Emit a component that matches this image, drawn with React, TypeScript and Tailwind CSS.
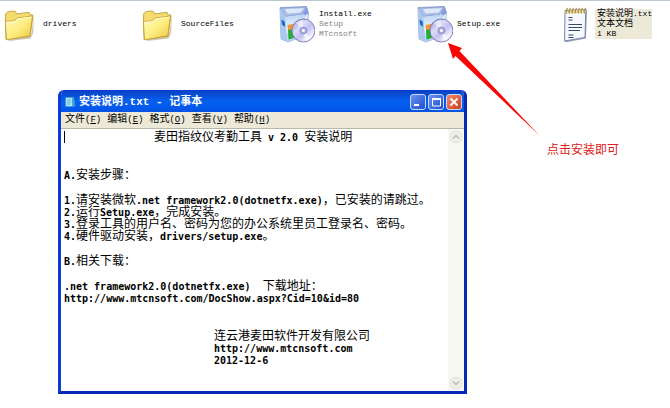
import type { ReactNode } from 'react'

const menus = [
  { label: '文件', accessKey: 'F' },
  { label: '编辑', accessKey: 'E' },
  { label: '格式', accessKey: 'O' },
  { label: '查看', accessKey: 'V' },
  { label: '帮助', accessKey: 'H' },
]

const documentLines = [
  { text: '麦田指纹仪考勤工具 v 2.0 安装说明', indent: 'pl-[90px]' },
  { text: '' },
  { text: '' },
  { text: 'A.安装步骤：' },
  { text: '' },
  { text: '1.请安装微软.net framework2.0(dotnetfx.exe)，已安装的请跳过。' },
  { text: '2.运行Setup.exe，完成安装。' },
  { text: '3.登录工具的用户名、密码为您的办公系统里员工登录名、密码。' },
  { text: '4.硬件驱动安装，drivers/setup.exe。' },
  { text: '' },
  { text: 'B.相关下载：' },
  { text: '' },
  { text: '.net framework2.0(dotnetfx.exe)  下载地址：' },
  { text: 'http://www.mtcnsoft.com/DocShow.aspx?Cid=10&id=80' },
  { text: '' },
  { text: '' },
  { text: '连云港麦田软件开发有限公司', indent: 'pl-[150px]' },
  { text: 'http://www.mtcnsoft.com', indent: 'pl-[150px]' },
  { text: '2012-12-6', indent: 'pl-[150px]' },
]

function FolderIcon() {
  return (
    <svg viewBox="0 0 36 36" className="size-9" aria-hidden="true">
      <defs>
        <linearGradient id="folderFront" x1="0" y1="0" x2="1" y2="1">
          <stop offset="0" stopColor="#fffbc0" />
          <stop offset="0.5" stopColor="#fdee83" />
          <stop offset="1" stopColor="#edc53f" />
        </linearGradient>
      </defs>
      <path d="M4 32 L28 29.500 L31 10 L30 27.500 L27.500 32.500 L6 35Z" fill="#b9ad8a" opacity="0.7" />
      <path d="M2.500 14 L2.700 7.500 Q4 5.700 7 5.400 L11 5 Q13 5 13.500 8 L26 6.300 L27 9 L29.500 8.800 L30 10 L27 30 L3 33.500Z" fill="#f4dc70" stroke="#b7962f" strokeWidth="0.800" />
      <path d="M2.300 15.500 L11.500 14.800 L14 12 L29.500 10 L26.800 29.800 L3.600 33.800Z" fill="url(#folderFront)" stroke="#c39a28" strokeWidth="0.800" />
      <path d="M3.200 16.400 L12 15.700 L14.500 13 L28.500 11" fill="none" stroke="#fffde0" strokeWidth="0.900" />
    </svg>
  )
}

function SetupIcon() {
  return (
    <svg viewBox="0 0 36 38" className="h-[38px] w-9" aria-hidden="true">
      <defs>
        <linearGradient id="boxFront" x1="0" y1="0" x2="0" y2="1">
          <stop offset="0" stopColor="#bad4f7" />
          <stop offset="0.5" stopColor="#edf4fd" />
          <stop offset="1" stopColor="#a9c8f0" />
        </linearGradient>
        <linearGradient id="disc" x1="0" y1="0" x2="1" y2="1">
          <stop offset="0" stopColor="#8d8cd4" />
          <stop offset="0.350" stopColor="#dcdcf8" />
          <stop offset="0.550" stopColor="#c3c0ef" />
          <stop offset="0.800" stopColor="#f4f4ff" />
          <stop offset="1" stopColor="#9997d5" />
        </linearGradient>
      </defs>
      <path d="M1 2.500 L27.500 1.500 L29.500 8 L27 30 L9 37 L2 34Z" fill="#e8f0fb" stroke="#8398c4" strokeWidth="0.700" />
      <path d="M1.200 3 L27.300 1.800 L23 9.500 L6.500 11.500Z" fill="#a9bfea" stroke="#7188bd" strokeWidth="0.600" />
      <path d="M6 4 L25 3.200 L21.500 7.500 L8.500 8.500Z" fill="#dfe9fa" />
      <path d="M27.500 1.800 L29.600 8 L25.800 11 L23.800 9Z" fill="#839bdc" />
      <path d="M1.300 3.500 L6.500 12 L8.500 37 L2 33.500Z" fill="#a9c9f0" />
      <path d="M2.500 14.500 L5.500 16.500 L6 22 L3 19.500Z" fill="#1767c4" />
      <path d="M6.500 12 L26 9.500 L27.500 30 L8.500 37Z" fill="url(#boxFront)" />
      <path d="M8.500 20 L16 18.500 L16.500 24.500 L9 25.500Z" fill="#f29837" />
      <path d="M9 25 L15.500 24 L16.300 32.500 L9.500 34.500Z" fill="#22ae32" />
      <circle cx="24.400" cy="25.500" r="11.500" fill="url(#disc)" stroke="#7673b7" strokeWidth="0.900" />
      <path d="M24.400 25.500 L17 18 A10.500 10.500 0 0 1 24 15Z" fill="#fff" opacity="0.550" />
      <path d="M24.400 25.500 L32 33 A10.500 10.500 0 0 1 26 36Z" fill="#fff" opacity="0.600" />
      <circle cx="24.400" cy="25.500" r="3.500" fill="#a9a7dc" stroke="#7774b8" strokeWidth="0.500" />
      <circle cx="24.400" cy="25.500" r="1.500" fill="#fff" />
    </svg>
  )
}

function TextFileIcon() {
  return (
    <svg viewBox="0 0 36 38" className="h-[38px] w-9" aria-hidden="true">
      <path d="M11.500 5 L32 5 L31 33.500 L12 37 Q9 37 9.300 35Z" fill="#9ba0ad" />
      <path d="M10 5.500 L30.800 4.500 L30 32.500 L9.600 36Z" fill="#f5f8fe" stroke="#7386b2" strokeWidth="1" />
      <path d="M10 6 L30.500 5 L30.500 7.500 L10 8.500Z" fill="#e9d99a" />
      {[11.5, 14.5, 17.5, 20.5, 23.5, 26.5, 29.5].map((x) => (
        <path key={x} d={`M${x} 8.500 Q${x - 1.2} 5 ${x + 1.3} 3.200`} fill="none" stroke="#ad8c36" strokeWidth="1.200" />
      ))}
      <path d="M13.500 12.500 H17.500 M13.500 15 H17.500 M13.500 19.500 H27 M13.500 22.500 H27 M13.500 25.500 H25 M13.500 30 H18.500 M13.500 32.500 H18.500" stroke="#3f4963" strokeWidth="1.100" />
    </svg>
  )
}

function NotepadIcon() {
  return (
    <svg viewBox="0 0 14 14" className="size-3.5" aria-hidden="true">
      <path d="M3.500 2 H10.500 L12.500 11 L4.500 12Z" fill="#5ab9dc" />
      <path d="M2.500 2.500 H9.500 L9.800 11.500 H2.500Z" fill="#a9e3f5" stroke="#3a8fc4" strokeWidth="0.700" />
      <path d="M4 5 H8 M4 7 H8 M4 9 H7" stroke="#5597c7" strokeWidth="0.700" />
      <path d="M9.500 2.500 L12.500 11 L9.800 11.500Z" fill="#329dd1" />
    </svg>
  )
}

function FileItem({ icon, children }: { icon: ReactNode; children: ReactNode }) {
  return (
    <div className="flex items-center gap-1 whitespace-nowrap pl-[3px]">
      <span className="shrink-0">{icon}</span>
      <div className="text-[8px] leading-[10px] text-black">{children}</div>
    </div>
  )
}

// Latin runs use the bold fixed-width face, everything else the regular CJK one
function DocumentLine({ text, indent = '' }: { text: string; indent?: string }) {
  if (!text) {
    return <div className="h-[13px]" />
  }

  return (
    <div className={`h-3 whitespace-pre leading-3 ${indent}`}>
      {text.split(/([\x20-\x7e]+)/).map((run, i) =>
        i % 2 ? (
          <span key={i} className="font-['DejaVu_Sans_Mono','Noto_Sans_CJK_SC',monospace] text-[10px] font-bold">
            {run}
          </span>
        ) : (
          run
        )
      )}
    </div>
  )
}

function ScrollButton({ direction }: { direction: 'up' | 'down' }) {
  return (
    <button
      type="button"
      aria-label={direction === 'up' ? '向上滚动' : '向下滚动'}
      className="flex size-3 items-center justify-center rounded-sm border border-[#e3e2d9] bg-[#f0efe8]"
    >
      <svg viewBox="0 0 8 8" className="size-2" fill="none" stroke="#bdbcae" strokeWidth="1.500">
        <path d={direction === 'up' ? 'M1 5.500 L4 2.500 L7 5.500' : 'M1 2.500 L4 5.500 L7 2.500'} />
      </svg>
    </button>
  )
}

function TitleBar() {
  const button = 'flex size-4 items-center justify-center rounded-[3px] border border-[#c8d8fa]'
  return (
    <header className="flex h-[21px] items-center bg-linear-to-b from-[#0a43c4] via-[#0560f2] to-[#0453e4] px-0.5">
      <NotepadIcon />
      <h1 className="ml-0.5 flex-1 whitespace-pre font-['Liberation_Mono','Noto_Sans_CJK_SC',monospace] text-[11px] font-bold leading-4 text-white">
        安装说明.txt - 记事本
      </h1>
      <div className="flex gap-0.5">
        <button type="button" aria-label="最小化" className={`${button} bg-linear-to-br from-[#6c93f0] to-[#1c4dd0]`}>
          <svg viewBox="0 0 14 14" className="size-3.5">
            <path d="M3 10 H8" stroke="#fff" strokeWidth="2" />
          </svg>
        </button>
        <button type="button" aria-label="最大化" className={`${button} bg-linear-to-br from-[#6c93f0] to-[#1c4dd0]`}>
          <svg viewBox="0 0 14 14" className="size-3.5" fill="none" stroke="#fff">
            <path d="M3 3.500 H11.500 V11 H3.500 V3.500" />
            <path d="M3 4 H12" strokeWidth="2" />
          </svg>
        </button>
        <button type="button" aria-label="关闭" className={`${button} bg-linear-to-br from-[#f0896c] to-[#cf3a12]`}>
          <svg viewBox="0 0 14 14" className="size-3.5" stroke="#fff" strokeWidth="1.800">
            <path d="M3.500 3.500 L10.500 10.500 M10.500 3.500 L3.500 10.500" />
          </svg>
        </button>
      </div>
    </header>
  )
}

function NotepadWindow() {
  return (
    <section className="ml-[58px] w-[61%] overflow-hidden rounded-t-md border-[3px] border-t border-[#0a3bd6] border-b-[#0826b8] border-r-[#0826b8]">
      <TitleBar />
      <nav className="flex h-[17px] items-center gap-1.5 border-b border-[#b9b7a8] bg-[#ece9d8] pl-1">
        {menus.map((menu) => (
          <button
            key={menu.label}
            type="button"
            className="whitespace-nowrap font-['Liberation_Mono','Noto_Sans_CJK_SC',monospace] text-[10px] leading-4 text-black"
          >
            {menu.label}
            <span className="text-[9px]">
              (<u>{menu.accessKey}</u>)
            </span>
          </button>
        ))}
      </nav>
      <div className="flex bg-white">
        <div
          role="textbox"
          aria-label="安装说明.txt"
          aria-multiline="true"
          contentEditable
          suppressContentEditableWarning
          spellCheck={false}
          className="relative min-w-0 flex-1 pb-[26px] pl-[3px] pt-px font-['Noto_Sans_CJK_SC',sans-serif] text-[12px] text-black outline-none"
        >
          <span className="absolute left-[3px] top-0.5 h-3 w-px bg-black" />
          {documentLines.map((line, i) => (
            <DocumentLine key={i} text={line.text} indent={line.indent} />
          ))}
        </div>
        <div className="flex w-4 flex-col items-center justify-between bg-[#f7f7f2] py-0.5">
          <ScrollButton direction="up" />
          <ScrollButton direction="down" />
        </div>
      </div>
    </section>
  )
}

export default function App() {
  return (
    <main className="relative min-h-screen overflow-hidden border-t border-[#bcc6d0] bg-white font-['Liberation_Mono','Noto_Sans_CJK_SC',monospace]">
      <div className="mb-[45px] grid h-11 grid-cols-[138fr_138fr_138fr_138fr_118fr] items-center pt-0.5">
        <FileItem icon={<FolderIcon />}>drivers</FileItem>
        <FileItem icon={<FolderIcon />}>SourceFiles</FileItem>
        <FileItem icon={<SetupIcon />}>
          <p>Install.exe</p>
          <p className="text-[#858585]">Setup</p>
          <p className="text-[#858585]">MTcnsoft</p>
        </FileItem>
        <FileItem icon={<SetupIcon />}>Setup.exe</FileItem>
        <FileItem icon={<TextFileIcon />}>
          <div className="bg-[#ece9d8] pl-0.5">
            <p>
              <span className="text-[9px]">安装说明</span>.txt
            </p>
            <p className="text-[9px]">文本文档</p>
            <p>1 KB</p>
          </div>
        </FileItem>
      </div>

      <NotepadWindow />

      {/* Callout pointing at Setup.exe */}
      <svg viewBox="0 0 92 93" className="absolute left-[448px] top-[42px] h-[93px] w-[92px]" aria-hidden="true">
        <path d="M0 0 L14 5 L11.500 8 L91.500 92.500 L7.500 13 L5 16Z" fill="#f80606" />
      </svg>
      <p className="absolute left-[547px] top-[140px] whitespace-nowrap font-['Noto_Sans_CJK_SC',sans-serif] text-[12px] leading-4 text-[#df2020]">
        点击安装即可
      </p>
    </main>
  )
}
